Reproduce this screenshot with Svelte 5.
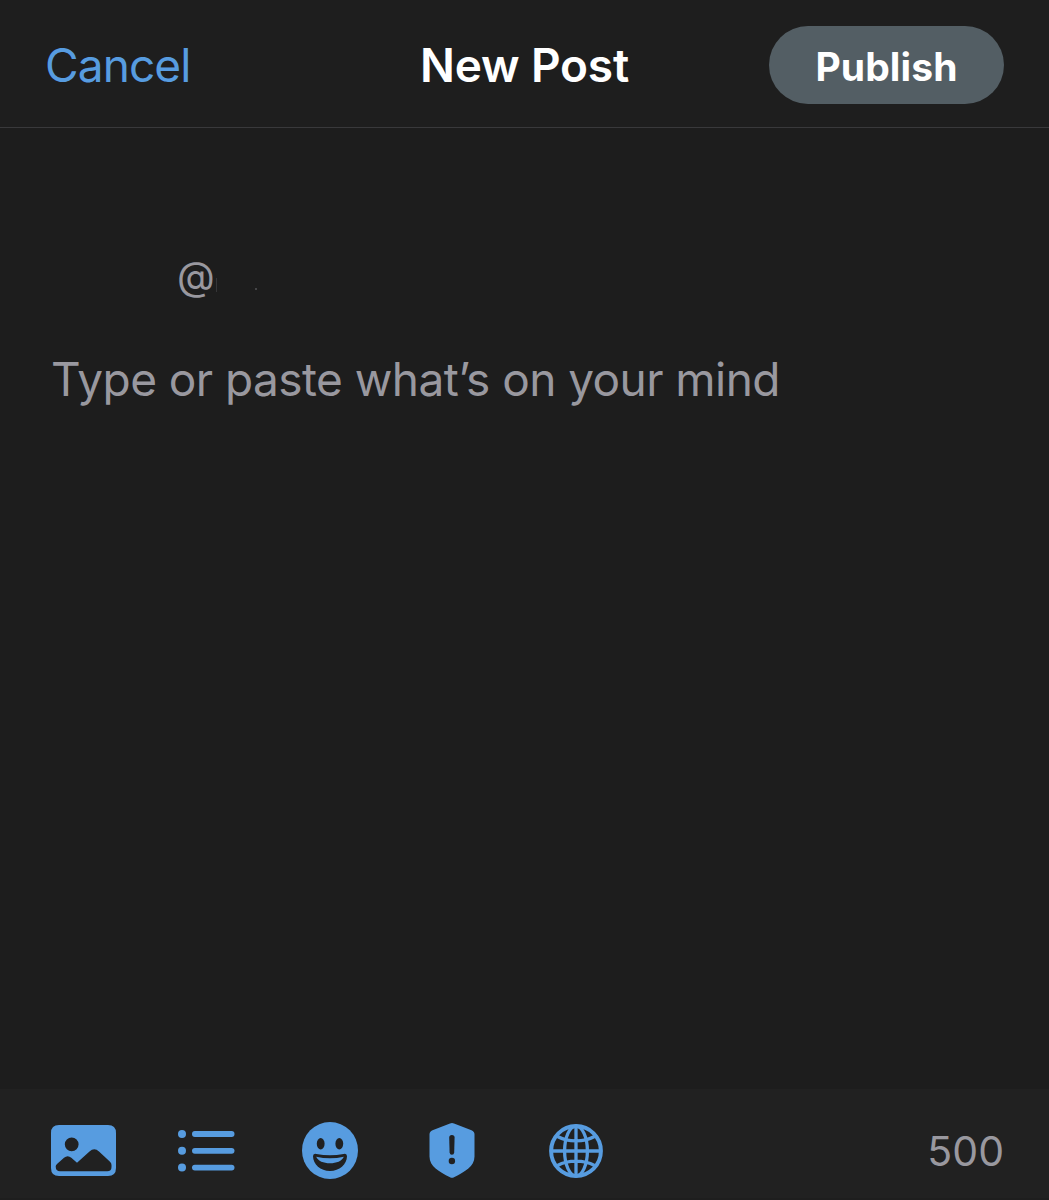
<script lang="ts">
  const limit = 500;

  let text = $state("");

  const remaining = $derived(limit - text.length);
</script>

<div class="composer">
  <header class="navbar">
    <button class="cancel" type="button">Cancel</button>
    <h1 class="title">New Post</h1>
    <button class="publish" type="button">Publish</button>
  </header>

  <main class="editor">
    <div class="account">
      <span class="at">@</span>
      <span class="cursor"></span>
      <span class="speck"></span>
    </div>
    <textarea
      class="input"
      placeholder="Type or paste what’s on your mind"
      aria-label="Post text"
      bind:value={text}
    ></textarea>
  </main>

  <footer class="toolbar">
    <button class="tool photo" type="button" aria-label="Add media">
      <svg width="65" height="51" viewBox="0 0 65 51">
        <path
          fill="currentColor"
          fill-rule="evenodd"
          d="M8 0H57Q65 0 65 8V43Q65 51 57 51H8Q0 51 0 43V8Q0 0 8 0ZM20.7 12.4A6.9 6.9 0 1 0 20.7 26.2A6.9 6.9 0 1 0 20.7 12.4ZM4.7 41.5Q4.700 40.300 6 39L13 32.700Q16.700 29.700 20.300 32.700L26 37.700L38.500 26.500Q43.300 22.200 48 26.500L59 36.700Q60.500 38 60.500 40V42Q60.500 46.300 56.200 46.300H9Q4.700 46.300 4.700 41.500Z"
        />
      </svg>
    </button>
    <button class="tool list" type="button" aria-label="Add poll">
      <svg width="57" height="42" viewBox="0 0 57 42" fill="currentColor">
        {#each [4, 20.8, 37.6] as y (y)}
          <circle cx="4" cy={y} r="4" />
          <rect x="14" y={y - 2.9} width="42.5" height="5.8" rx="2.9" />
        {/each}
      </svg>
    </button>
    <button class="tool emoji" type="button" aria-label="Add emoji">
      <svg width="56" height="57" viewBox="0 0 56 57">
        <ellipse cx="28" cy="28.5" rx="28" ry="28.5" fill="currentColor" />
        <g class="cutout">
          <ellipse cx="18.7" cy="21.7" rx="3.9" ry="5.7" />
          <ellipse cx="37.3" cy="21.7" rx="3.9" ry="5.7" />
          <path d="M11 34.3Q11 31 14.4 31.9Q28 34.7 41.6 31.9Q45 31 45 34.3C44.8 42.5 37.5 49 28 49S11.2 42.5 11 34.3Z" />
        </g>
        <path fill="currentColor" d="M14.2 34.7Q28 37.9 41.8 34.7C40 39.1 34.5 41.2 28 41.2S16 39.1 14.2 34.7Z" />
      </svg>
    </button>
    <button class="tool shield" type="button" aria-label="Content warning">
      <svg width="46" height="55" viewBox="0 0 46 55">
        <path
          fill="currentColor"
          d="M21 .5Q23 -.3 25 .5L42.5 7.3Q45.5 8.5 45.5 11.5V33.5C45.5 43.5 36 48.5 25 54.3Q23 55.3 21 54.3C10 48.5 .5 43.5 .5 33.5V11.5Q.5 8.5 3.500 7.3Z"
        />
        <g class="cutout">
          <path d="M20.2 14.6Q20.2 12 22.9 12T25.6 14.6L25.2 29.4Q25 31.700 22.9 31.700T20.6 29.4Z" />
          <circle cx="22.9" cy="38" r="3.2" />
        </g>
      </svg>
    </button>
    <button class="tool globe" type="button" aria-label="Visibility">
      <svg
        width="54"
        height="54"
        viewBox="0 0 54 54"
        fill="none"
        stroke="currentColor"
        stroke-width="3.3"
      >
        <circle cx="27" cy="27" r="24.9" stroke-width="4" />
        <ellipse cx="27" cy="27" rx="11.4" ry="24.9" />
        <path d="M27 2V52M2 27H52M8.500 12.500Q16.500 16.900 27 16.900T45.500 12.500M8.500 41.500Q16.500 37.100 27 37.100T45.500 41.500" />
      </svg>
    </button>
    <span class="count">{remaining}</span>
  </footer>
</div>

<style>
  :global(body) {
    margin: 0;
    background: #1d1d1d;
  }

  .composer {
    display: flex;
    flex-direction: column;
    height: 1200px;
    overflow: hidden;
    font-family: Inter, "Liberation Sans", sans-serif;
    color: #99989f;
    background: #1d1d1d;
  }

  button {
    margin: 0;
    padding: 0;
    border: 0;
    font: inherit;
    color: #579ce0;
    background: none;
    white-space: nowrap;
  }

  .navbar {
    display: grid;
    grid-template-columns: 1fr auto 1fr;
    align-items: center;
    box-sizing: border-box;
    height: 128px;
    padding: 3px 45px 0;
    border-bottom: 1px solid #39393b;
    background: #1e1e1e;
  }

  .cancel {
    justify-self: start;
    font-size: 46px;
    letter-spacing: -0.9px;
  }

  .title {
    margin: 0;
    font-size: 46px;
    font-weight: 600;
    letter-spacing: -0.2px;
    color: #fff;
  }

  .publish {
    justify-self: end;
    width: 235px;
    height: 78px;
    padding-top: 2px;
    border-radius: 39px;
    font-size: 39px;
    font-weight: 700;
    letter-spacing: 0.1px;
    color: #fff;
    background: #535e64;
  }

  .editor {
    flex: 1;
    display: flex;
    flex-direction: column;
    padding: 120px 50px 0 51px;
  }

  .account {
    display: flex;
    height: 56px;
    padding-left: 126px;
    font-size: 39px;
    line-height: 56px;
  }

  .cursor {
    width: 1px;
    height: 14px;
    margin: 30px 0 0 1px;
    background: #353537;
  }

  .speck {
    width: 2px;
    height: 2px;
    margin: 40px 0 0 38px;
    background: #454547;
  }

  .input {
    flex: 1;
    margin: 46px 0 0;
    padding: 0;
    border: 0;
    outline: 0;
    resize: none;
    font: 46px/58px Inter, "Liberation Sans", sans-serif;
    letter-spacing: -0.56px;
    color: #fff;
    background: none;
  }

  .input::placeholder {
    color: #99989f;
    opacity: 1;
  }

  .toolbar {
    display: flex;
    align-items: center;
    box-sizing: border-box;
    height: 111px;
    padding: 14px 45px 0 51px;
    border-bottom: 2px solid #1e1e1e;
    background: #212121;
  }

  .tool {
    display: flex;
  }

  .list {
    margin-left: 62px;
  }

  .emoji {
    margin-left: 67px;
  }

  .shield {
    margin-left: 71px;
  }

  .globe {
    margin-left: 74px;
  }

  .cutout {
    fill: #212121;
  }

  .count {
    margin-left: auto;
    font-size: 41px;
  }
</style>
